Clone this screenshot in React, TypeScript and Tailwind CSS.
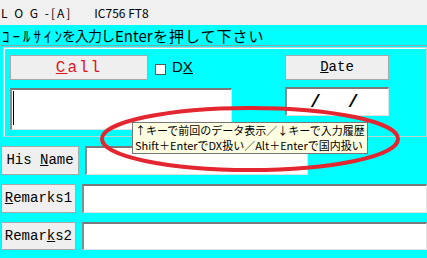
import React from 'react';

const mono = { fontFamily: '"Liberation Mono", "DejaVu Sans Mono", monospace' };
const jp = { fontFamily: '"Noto Sans CJK JP", "Noto Sans", sans-serif' };

function Btn({ children, className = '' }: { children: React.ReactNode; className?: string }) {
  return (
    <div
      className={`flex items-center justify-center bg-[#efefef] border border-[#a9a9a9] text-[14px] text-black ${className}`}
      style={mono}
    >
      {children}
    </div>
  );
}

function Field({ className = '', children }: { className?: string; children?: React.ReactNode }) {
  return (
    <div
      className={`bg-white border-t-2 border-l-2 border-b border-r border-t-[#7a7a7a] border-l-[#8a8a8a] border-b-[#e2e2e2] border-r-[#e2e2e2] ${className}`}
    >
      {children}
    </div>
  );
}

export default function App() {
  return (
    <div className="relative w-[427px] h-[258px] overflow-hidden bg-[#00ffff]" style={jp}>
      {/* title bar */}
      <div className="h-[25px] bg-[#f0f0f0] flex items-center text-[12px] text-black">
        <span className="ml-[1px] tracking-[2px]">L O G -[A]</span>
        <span className="ml-[22px]">IC756 FT8</span>
      </div>

      {/* prompt */}
      <div className="h-[20px] flex items-center pl-[2px] text-[15px] text-black leading-none whitespace-nowrap">
        <span className="w-[60px] tracking-[3px]">ｺｰﾙｻｲﾝ</span>
        <span className="w-[53px] text-[14px] tracking-[-1px]">を入力し</span>
        <span className="w-[38px]">Enter</span>
        <span className="tracking-[1px]">を押して下さい</span>
      </div>
      <div className="h-px bg-[#7fa9a9]" />

      {/* group frame */}
      <div className="mt-[1px] ml-[3px] border border-[#b9d6d6] shadow-[inset_1px_1px_0_#ffffff] pl-[6px] pt-[7px] pb-[6px]">
        <div className="flex items-start w-[379px]">
          <Btn className="w-[138px] h-[25px] !text-[16px] !text-[#e0141e] tracking-[2px]">
            <span className="underline">C</span>all
          </Btn>
          <div className="ml-[7px] mt-[9px] w-[11px] h-[11px] bg-white border border-[#555]" />
          <span className="ml-[6px] mt-[4px] text-[15px] text-black leading-none" style={{ fontFamily: '"Liberation Sans", sans-serif' }}>
            D<span className="underline">X</span>
          </span>
          <Btn className="ml-auto w-[104px] h-[25px]">
            <span className="underline">D</span>ate
          </Btn>
        </div>
        <div className="flex items-start w-[379px] mt-[8px]">
          <Field className="w-[222px] h-[42px] pl-[1px] pt-[1px]">
            <div className="w-px h-[34px] bg-black" />
          </Field>
          <Field className="ml-auto -mt-[1px] w-[104px] h-[29px] flex items-center text-[18px] font-bold text-black pl-[23px]">
            <span style={mono}>/</span>
            <span className="ml-[27px]" style={mono}>/</span>
          </Field>
        </div>
      </div>

      {/* lower rows */}
      <div className="ml-[1px] mt-[9px] flex flex-col gap-[9px]">
        <div className="flex gap-[6px]">
          <Btn className="w-[78px] h-[29px]">
            His&nbsp;<span className="underline">N</span>ame
          </Btn>
          <Field className="w-[223px] h-[29px]" />
        </div>
        <div className="flex gap-[6px]">
          <Btn className="w-[78px] h-[29px]">
            <span className="underline">R</span>emarks1
          </Btn>
          <Field className="w-[360px] h-[29px]" />
        </div>
        <div className="flex gap-[6px]">
          <Btn className="w-[78px] h-[28px]">
            Remar<span className="underline">k</span>s2
          </Btn>
          <Field className="w-[360px] h-[28px]" />
        </div>
      </div>

      {/* red annotation ellipse */}
      <svg className="absolute left-[98px] top-[104px]" width="304" height="70" viewBox="0 0 304 70">
        <ellipse cx="152" cy="35" rx="148" ry="31" fill="none" stroke="#e3262f" strokeWidth="4" />
      </svg>

      {/* tooltip */}
      <div className="absolute left-[132px] top-[122px] w-[236px] h-[32px] bg-[#ffffe1] border border-[#767676] flex flex-col justify-center pl-[2px] text-[11px] leading-[15px] text-black whitespace-nowrap">
        <div>↑キーで前回のデータ表示／↓キーで入力履歴</div>
        <div>Shift＋EnterでDX扱い／Alt＋Enterで国内扱い</div>
      </div>
    </div>
  );
}
